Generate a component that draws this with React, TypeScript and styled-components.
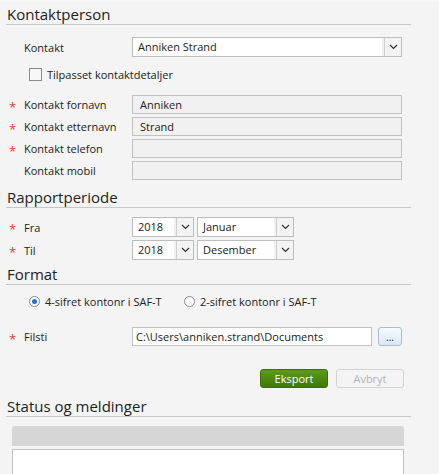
import styled, { createGlobalStyle } from "styled-components";

const Global = createGlobalStyle`
    body {
        margin: 0;
        background: #f4f4f4;
        font-family: "Open Sans", "Noto Sans", sans-serif;
        font-size: 11px;
        color: #222;
    }
`;

const Page = styled.div`
    width: 439px;
    height: 474px;
    overflow: hidden;
    background: #f4f4f4;
    border-top: 2px solid #f8f8f8;
    box-sizing: border-box;
    padding-left: 6px;
`;

const SectionTitle = styled.div<{ $top: number }>`
    width: 404px;
    margin-top: ${p => p.$top}px;
    font-size: 15px;
    line-height: 20px;
    color: #222;
    border-bottom: 1px solid #c8c8c8;
    padding-left: 1px;
`;

const Row = styled.div<{ $top: number }>`
    display: grid;
    grid-template-columns: 18px 108px 270px;
    align-items: center;
    margin-top: ${p => p.$top}px;
    height: 19px;
`;

const Star = styled.span`
    color: #e53b2f;
    font-size: 13px;
    padding-left: 3px;
    line-height: 10px;
    padding-top: 4px;
`;

const Label = styled.span`
    white-space: nowrap;
`;

const ReadInput = styled.div`
    box-sizing: border-box;
    height: 19px;
    background: #f1f1f1;
    border: 1px solid #c2c2c2;
    padding: 0 7px;
    line-height: 17px;
`;

const TextInput = styled.div`
    box-sizing: border-box;
    width: 240px;
    height: 19px;
    background: #fff;
    border: 1px solid #c2c2c2;
    padding: 0 3px;
    line-height: 17px;
    white-space: nowrap;
    overflow: hidden;
`;

const SelectBox = styled.div<{ $w?: number }>`
    box-sizing: border-box;
    display: flex;
    height: 20px;
    width: ${p => (p.$w ? `${p.$w}px` : "100%")};
    background: #fff;
    border: 1px solid #bdbdbd;
`;

const SelectValue = styled.span`
    flex: 1;
    padding-left: 5px;
    line-height: 18px;
    border-right: 2px solid #f0f0f0;
`;

const Arrow = styled.span`
    width: 16px;
    display: flex;
    align-items: center;
    justify-content: center;
    background: #f3f3f3;
    border-left: 1px solid #cfcfcf;
`;

const Pair = styled.div`
    display: flex;
    gap: 3px;
`;

const CheckRow = styled.label`
    display: flex;
    align-items: center;
    gap: 5px;
    margin-top: 11px;
    margin-left: 23px;
    height: 14px;
`;

const CheckBox = styled.span`
    box-sizing: border-box;
    width: 13px;
    height: 13px;
    border: 1px solid #8a8a8a;
    background: #f7f7f7;
`;

const RadioRow = styled.div`
    display: flex;
    align-items: center;
    margin-top: 9px;
    margin-left: 23px;
    height: 15px;
`;

const RadioItem = styled.span<{ $w: number }>`
    display: flex;
    align-items: center;
    gap: 5px;
    width: ${p => p.$w}px;
`;

const Radio = styled.span<{ $on?: boolean }>`
    box-sizing: border-box;
    width: 11px;
    height: 11px;
    border-radius: 50%;
    border: 1px solid #8a8a8a;
    background: #fafafa;
    display: flex;
    align-items: center;
    justify-content: center;
    &::after {
        content: "";
        width: 5px;
        height: 5px;
        border-radius: 50%;
        background: ${p => (p.$on ? "#2a6fc9" : "transparent")};
    }
`;

const FileLine = styled.div`
    display: flex;
    gap: 6px;
    align-items: center;
`;

const DotsButton = styled.button`
    box-sizing: border-box;
    width: 24px;
    height: 19px;
    padding: 0;
    border: 1px solid #a9bcd1;
    border-radius: 3px;
    background: linear-gradient(#f7fbff, #d9e7f4);
    font-family: inherit;
    font-size: 10px;
    line-height: 10px;
    color: #222;
`;

const Buttons = styled.div`
    display: flex;
    justify-content: flex-end;
    gap: 8px;
    width: 398px;
    margin-top: 23px;
`;

const Btn = styled.button<{ $primary?: boolean }>`
    box-sizing: border-box;
    width: 68px;
    height: 19px;
    padding: 0;
    font-family: inherit;
    font-size: 11px;
    border-radius: 3px;
    border: 1px solid ${p => (p.$primary ? "#3e6e0c" : "#d3d3d3")};
    background: ${p => (p.$primary ? "linear-gradient(#5d9a1c, #3f7904)" : "#f4f4f4")};
    color: ${p => (p.$primary ? "#fff" : "#b4b4b4")};
`;

const StatusBar = styled.div`
    width: 392px;
    height: 20px;
    margin: 9px 0 0 6px;
    background: #d6d6d6;
    border-radius: 3px 3px 0 0;
`;

const StatusBox = styled.div`
    box-sizing: border-box;
    width: 392px;
    height: 40px;
    margin: 3px 0 0 6px;
    background: #fff;
    border: 1px solid #c2c2c2;
`;

function Chevron() {
    return (
        <svg width="9" height="6" viewBox="0 0 9 6">
            <path d="M1 1 L4.5 4.5 L8 1" fill="none" stroke="#333" strokeWidth="1.2" />
        </svg>
    );
}

function Select({ value, w }: { value: string; w?: number }) {
    return (
        <SelectBox $w={w}>
            <SelectValue>{value}</SelectValue>
            <Arrow><Chevron /></Arrow>
        </SelectBox>
    );
}

const contactFields = [
    { label: "Kontakt fornavn", value: "Anniken", req: true },
    { label: "Kontakt etternavn", value: "Strand", req: true },
    { label: "Kontakt telefon", value: "", req: true },
    { label: "Kontakt mobil", value: "", req: false },
];

export default function App() {
    return (
        <>
            <Global />
            <Page>
                <SectionTitle $top={2}>Kontaktperson</SectionTitle>
                <Row $top={12}>
                    <span />
                    <Label>Kontakt</Label>
                    <Select value="Anniken Strand" />
                </Row>
                <CheckRow>
                    <CheckBox />
                    Tilpasset kontaktdetaljer
                </CheckRow>
                {contactFields.map((f, i) => (
                    <Row key={f.label} $top={i === 0 ? 14 : 3}>
                        {f.req ? <Star>*</Star> : <span />}
                        <Label>{f.label}</Label>
                        <ReadInput>{f.value}</ReadInput>
                    </Row>
                ))}

                <SectionTitle $top={7}>Rapportperiode</SectionTitle>
                <Row $top={9}>
                    <Star>*</Star>
                    <Label>Fra</Label>
                    <Pair>
                        <Select value="2018" w={62} />
                        <Select value="Januar" w={97} />
                    </Pair>
                </Row>
                <Row $top={4}>
                    <Star>*</Star>
                    <Label>Til</Label>
                    <Pair>
                        <Select value="2018" w={62} />
                        <Select value="Desember" w={97} />
                    </Pair>
                </Row>

                <SectionTitle $top={5}>Format</SectionTitle>
                <RadioRow>
                    <RadioItem $w={155}><Radio $on />4-sifret kontonr i SAF-T</RadioItem>
                    <RadioItem $w={160}><Radio />2-sifret kontonr i SAF-T</RadioItem>
                </RadioRow>
                <Row $top={18}>
                    <Star>*</Star>
                    <Label>Filsti</Label>
                    <FileLine>
                        <TextInput>C:\Users\anniken.strand\Documents</TextInput>
                        <DotsButton>...</DotsButton>
                    </FileLine>
                </Row>
                <Buttons>
                    <Btn $primary>Eksport</Btn>
                    <Btn>Avbryt</Btn>
                </Buttons>

                <SectionTitle $top={8}>Status og meldinger</SectionTitle>
                <StatusBar />
                <StatusBox />
            </Page>
        </>
    );
}
